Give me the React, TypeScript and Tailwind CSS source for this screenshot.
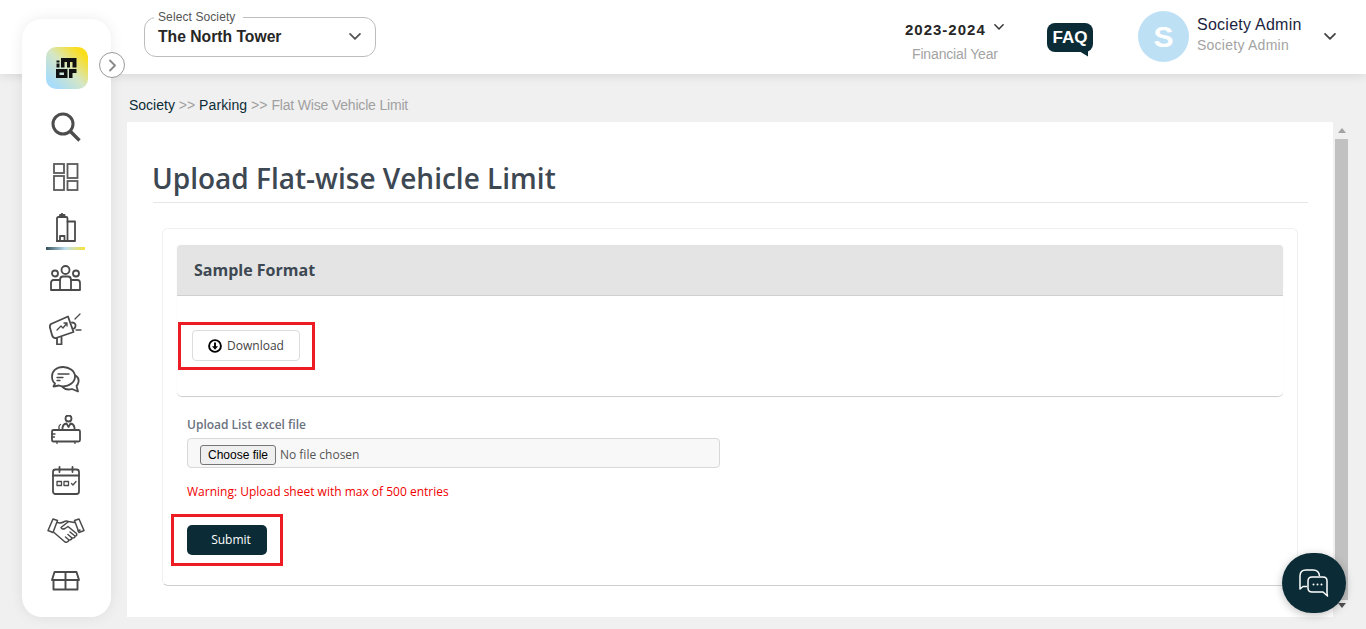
import React from "react";

const S = { fill: "none", stroke: "#4a4a4a", strokeWidth: 1.8, strokeLinecap: "round" as const, strokeLinejoin: "round" as const };

function Logo() {
  return (
    <div className="w-[42px] h-[42px] rounded-[10px] bg-[linear-gradient(45deg,#a9dcf8_15%,#d5e6c4_50%,#fade1e_85%)] flex items-center justify-center">
      <svg width="21" height="20" viewBox="0 0 21 20">
        <path fill="#111" fillRule="evenodd" d="M0.500 2.500H3.500V4.500H0.500ZM0.500 5.500H3.500V9.500H0.500ZM5 0H20.500V9.500H16.500V4H14V9.500H11V4H8.500V9.500H5ZM0 11H11.500V20H0ZM3.500 14.500V17H8V14.500ZM13 11H20.500V15H16.500V20H13Z" />
      </svg>
    </div>
  );
}

function SearchIcon() {
  return (
    <svg width="30" height="30" viewBox="0 0 30 30" fill="none" stroke="#4d4d4d" strokeWidth="3">
      <circle cx="12" cy="12" r="10" />
      <path d="M19.500 19.500L28.500 28.500" strokeWidth="3.400" />
    </svg>
  );
}
function GridIcon() {
  return (
    <svg width="26" height="28" viewBox="0 0 26 28" fill="none" stroke="#5a5a5a" strokeWidth="1.800">
      <rect x="1" y="1" width="10" height="9" />
      <rect x="14.500" y="1" width="10" height="14" />
      <rect x="1" y="13" width="10" height="14" />
      <rect x="14.500" y="18" width="10" height="9" />
    </svg>
  );
}
function BuildingIcon() {
  return (
    <svg width="20" height="29" viewBox="0 0 20 29" {...S}>
      <path d="M1 28V5.500Q1 4 2.500 4H10Q11.500 4 11.500 5.500V28" />
      <path d="M4 4V2H8.500V4M6 2V0.500" />
      <path d="M11.500 8.500H19V28H0.500" />
      <path d="M4 28V23H8.500V28" />
    </svg>
  );
}
function PeopleIcon() {
  return (
    <svg width="31" height="26" viewBox="0 0 31 26" {...S}>
      <circle cx="15.500" cy="5" r="4" />
      <circle cx="5" cy="8.500" r="3" />
      <circle cx="26" cy="8.500" r="3" />
      <path d="M10 25V15Q10 11.500 13 11.500H18Q21 11.500 21 15V25Z" />
      <path d="M10 15H3.500Q1 15 1 18V25H10M21 15H27.500Q30 15 30 18V25H21" />
    </svg>
  );
}
function MegaphoneIcon() {
  return (
    <svg width="33" height="32" viewBox="0 0 33 32" {...S}>
      <path d="M2 11L19 3.500L24.500 19L7 25Q4 25.500 3 22L0.800 14Q0.800 12 2 11Z" />
      <path d="M8 17L12 13L14 15L18 10M15 10H18V13" strokeWidth="1.300" />
      <path d="M23 9.500Q27 10 26.500 13Q26 16 24 15.500" />
      <path d="M8 25V31.500H12.500V24" />
      <path d="M26 6L31 1M27 17H32" strokeWidth="1.300" />
    </svg>
  );
}
function ChatsIcon() {
  return (
    <svg width="29" height="27" viewBox="0 0 29 27" {...S}>
      <path d="M12 1C5.500 1 1 5 1 10.500C1 13.500 2 16 4 17.500L2.500 20.500L8 19.500Q10 20.300 12 20.300C18.500 20.300 24 16 24 10.500C24 5 18.500 1 12 1Z" />
      <path d="M7 8H18M6 11.500H12M6 14.500H9" strokeWidth="1.300" />
      <path d="M24.500 9.500C27 11 28 13.500 27.500 16C27 18.500 26 19.500 25.500 20L27 25.500L21 23C17.500 24 14 23.500 11.500 21" />
    </svg>
  );
}
function ReceptionIcon() {
  return (
    <svg width="30" height="29" viewBox="0 0 30 29" {...S}>
      <circle cx="17.500" cy="3.500" r="3" />
      <path d="M11.500 15V12.500Q12 9 15.500 8.500L17.500 12L19.500 8.500Q23 9 23.500 12.500V15" />
      <path d="M8 14V11.500Q8.500 10 9.500 9.500" strokeWidth="1.300" />
      <path d="M2.500 15H27.500Q29 15 29 16.500V25Q29 26.500 27.500 26.500H2.500Q1 26.500 1 25V16.500Q1 15 2.500 15Z" />
      <path d="M1 19H4M1 22H3.500M6 26.500V28.500M24 26.500V28.500" strokeWidth="1.300" />
    </svg>
  );
}
function CalendarIcon() {
  return (
    <svg width="28" height="29" viewBox="0 0 28 29" {...S}>
      <rect x="1" y="3.500" width="26" height="24.500" rx="2.500" />
      <path d="M1 9.500H27M7.500 1V6M20.500 1V6" />
      <rect x="5" y="15.500" width="4.500" height="4" strokeWidth="1.300" />
      <rect x="12" y="15.500" width="4.500" height="4" strokeWidth="1.300" />
      <path d="M19.500 17.500L21 19L24 15.500" strokeWidth="1.300" />
    </svg>
  );
}
function HandshakeIcon() {
  return (
    <svg width="38" height="26" viewBox="0 0 38 26" {...S} strokeWidth="1.500">
      <path d="M6 1L10.500 2.500L6 14.500L1 12.500Z" />
      <path d="M32 1L27.500 2.500L32 14.500L37 12.500Z" />
      <path d="M10 4.500Q14 5.500 16.500 4Q19 2.500 21.500 3.500L27.500 4.500" />
      <path d="M31 13L33 12M21 4L14 9.500Q15 12 18 10.500L21 8.500L29.500 15.500Q30.500 18 28 18L23 14M28 18Q28 20.500 25 20L21 16.500M25 20Q24.500 22.500 22 22L18.500 19M22 22Q21 25 18 24L7 14.500" />
    </svg>
  );
}
function BoxIcon() {
  return (
    <svg width="29" height="20" viewBox="0 0 29 20" {...S} strokeWidth="1.900">
      <path d="M3.500 1H25.500L28 9H1Z" />
      <path d="M2.500 9V18.500H26.500V9M14.500 1V18.500" />
    </svg>
  );
}

function Chevron({ w = 12, sw = 2, color = "#4a4a4a" }: { w?: number; sw?: number; color?: string }) {
  return (
    <svg width={w} height={w * 0.62} viewBox="0 0 12 7.500" fill="none" stroke={color} strokeWidth={sw} strokeLinecap="round" strokeLinejoin="round">
      <path d="M1 1L6 6L11 1" />
    </svg>
  );
}

const railItems = [
  { icon: <SearchIcon /> },
  { icon: <GridIcon /> },
  { icon: <BuildingIcon />, active: true },
  { icon: <PeopleIcon /> },
  { icon: <MegaphoneIcon /> },
  { icon: <ChatsIcon /> },
  { icon: <ReceptionIcon /> },
  { icon: <CalendarIcon /> },
  { icon: <HandshakeIcon /> },
  { icon: <BoxIcon /> },
];

function Sidebar() {
  return (
    <aside className="absolute left-[22px] top-[19px] w-[89px] h-[598px] bg-white rounded-[20px] shadow-[0_0_14px_rgba(0,0,0,0.08)] z-20 pt-[28px] flex flex-col items-center">
      <Logo />
      <div className="mt-[12.500px] w-full flex flex-col">
        {railItems.map((it, i) => (
          <div key={i} className="relative h-[50.500px] pr-[2px] flex items-center justify-center">
            {it.icon}
            {it.active && (
              <div className="absolute left-[24px] bottom-[3px] w-[39px] h-[3px] bg-[linear-gradient(90deg,#33505a_0%,#bcdff0_50%,#f8e23a_100%)]" />
            )}
          </div>
        ))}
      </div>
      <button className="absolute left-[77px] top-[33px] w-[26px] h-[26px] rounded-full bg-white border border-[#9a9a9a] flex items-center justify-center">
        <svg width="9" height="13" viewBox="0 0 9 13" fill="none" stroke="#888" strokeWidth="1.800" strokeLinecap="round" strokeLinejoin="round">
          <path d="M2 1.500L7 6.500L2 11.500" />
        </svg>
      </button>
    </aside>
  );
}

function Header() {
  return (
    <header className="relative z-10 h-[74px] bg-white shadow-[0_2px_10px_rgba(0,0,0,0.1)] flex items-start pl-[144px] font-['Liberation_Sans',Arial,sans-serif]">
      <div className="relative mt-[17px] w-[232px] h-[40px] border border-[#bdbdbd] rounded-[12px] flex items-center justify-between pl-[13px] pr-[14px]">
        <span className="absolute left-[9px] -top-[7px] bg-white pl-[4px] pr-[8px] text-[12px] leading-[13px] tracking-[0.1px] text-[#555]">Select Society</span>
        <span className="text-[15.700px] font-bold text-[#262626]">The North Tower</span>
        <Chevron w={12} sw={1.800} color="#555" />
      </div>
      <div className="ml-[529px] w-[100px] mt-[19px] flex flex-col items-start">
        <div className="flex items-start h-[21px]">
          <span className="whitespace-nowrap text-[15px] leading-[21px] font-bold tracking-[1px] text-[#262626]">2023-2024</span>
          <span className="ml-[8px] mt-[5px]"><Chevron w={10} sw={1.800} color="#333" /></span>
        </div>
        <span className="mt-[4px] ml-[7px] whitespace-nowrap text-[14px] leading-[20px] tracking-[-0.15px] text-[#a3a3a3]">Financial Year</span>
      </div>
      <div className="ml-[42px] mt-[23px] w-[46px] h-[33px] relative">
        <div className="w-[46px] h-[29px] rounded-[8px] bg-[#0b2c36] text-white font-bold text-[17px] flex items-center justify-center">FAQ</div>
        <svg className="absolute left-[32px] top-[28px]" width="9" height="6" viewBox="0 0 9 6"><path d="M0 0H9V5.500Z" fill="#0b2c36" /></svg>
      </div>
      <div className="ml-[45px] mt-[11px] w-[51px] h-[51px] rounded-full bg-[#bde0f5] text-white text-[30px] font-bold flex items-center justify-center">S</div>
      <div className="ml-[8px] mt-[15px] flex flex-col">
        <span className="whitespace-nowrap text-[16px] leading-[20px] tracking-[0.25px] text-[#1c2440]">Society Admin</span>
        <span className="whitespace-nowrap text-[14px] leading-[20px] tracking-[0.25px] text-[#a3a3a3]">Society Admin</span>
      </div>
      <span className="ml-[22px] mt-[33px]"><Chevron w={12} sw={1.800} color="#444" /></span>
    </header>
  );
}

function Scrollbar() {
  return (
    <div className="w-[13px] ml-[2px] h-full flex flex-col items-center">
      <svg className="mt-[6px]" width="8" height="5" viewBox="0 0 8 5"><path d="M4 0L8 5H0Z" fill="#a3a3a3" /></svg>
      <div className="mt-[6px] w-[13px] h-[461px] bg-[#c1c1c1]" />
      <svg className="mt-[3px]" width="8" height="5" viewBox="0 0 8 5"><path d="M0 0H8L4 5Z" fill="#505050" /></svg>
    </div>
  );
}

export default function App() {
  return (
    <div className="relative w-[1366px] h-[629px] overflow-hidden bg-[#f0f0f0] font-['Open_Sans',sans-serif]">
      <Header />
      <Sidebar />
      <div className="h-[48px] pl-[129px] pt-[22px] text-[14px] leading-[18px] font-['Liberation_Sans',Arial,sans-serif] text-[#a0a0a0]">
        <span className="text-[#0b2c36]">Society</span> &gt;&gt; <span className="text-[#0b2c36] tracking-[0.1px]">Parking</span> &gt;&gt; <span className="tracking-[-0.18px]">Flat Wise Vehicle Limit</span>
      </div>
      <div className="ml-[127px] h-[495px] flex">
        <main className="w-[1206px] h-full bg-white pl-[26px] pr-[25px]">
          <h1 className="pt-[36px] h-[81px] border-b border-[#e6e6e6] text-[28px] leading-[40px] font-semibold text-[#3d4852]"><span className="-ml-[1px] inline-block">Upload Flat-wise Vehicle Limit</span></h1>
          <section className="mt-[25px] ml-[9px] mr-[10px] h-[358px] rounded-[6px] border border-[#f0f0f0] border-b-[#cfcfcf] pt-[16px] px-[14px]">
            <div className="h-[152px] rounded-t-[4px] rounded-b-[5px] border-b border-[#d0d0d0] shadow-[0_0_2px_rgba(0,0,0,0.05)]">
              <div className="h-[51px] bg-[#e4e4e4] border-b border-[#d0d0d0] pl-[17px] flex items-center rounded-t-[4px]">
                <h2 className="text-[16px] font-bold text-[#3d4852]">Sample Format</h2>
              </div>
              <div className="pt-[26px] pl-[1px]">
                <div className="w-[137px] h-[48px] border-[3px] border-[#ed1c24] pl-[11px] pt-[5px]">
                  <button className="w-[108px] h-[31px] rounded-[4px] border border-[#dcdcdc] bg-white flex items-center justify-center gap-[5px] text-[12px] text-[#444]">
                    <svg width="14" height="14" viewBox="0 0 14 14" fill="none" stroke="#000" strokeWidth="1.900">
                      <circle cx="7" cy="7" r="5.900" />
                      <path d="M7 3.500V9" strokeWidth="1.900" />
                      <path d="M4 7.200L7 10.700L10 7.200Z" fill="#000" stroke="none" />
                    </svg>
                    Download
                  </button>
                </div>
              </div>
            </div>
            <div className="pl-[10px]">
              <label className="block mt-[19px] text-[12px] leading-[17px] font-semibold text-[#6b7280]">Upload List excel file</label>
              <div className="mt-[5px] w-[533px] h-[30px] rounded-[4px] border border-[#d8d8d8] bg-[#f8f8f8] pl-[12px] pt-[3px] flex items-center gap-[4px] text-[12px] text-[#555]">
                <span className="w-[76px] h-[20px] rounded-[3px] border border-[#767676] bg-[#efefef] flex items-center justify-center text-[12px] text-black font-['Liberation_Sans',Arial,sans-serif]">Choose file</span>
                <span>No file chosen</span>
              </div>
              <p className="mt-[15px] text-[12px] leading-[17px] text-[#f00000]">Warning: Upload sheet with max of 500 entries</p>
            </div>
            <div className="-ml-[6px] mt-[14px] w-[112px] h-[52px] border-[3px] border-[#ed1c24] pl-[13px] pt-[8px]">
              <button className="w-[80px] h-[30px] rounded-[5px] bg-[#0b2c36] text-white text-[12px] font-medium pl-[8px]">Submit</button>
            </div>
          </section>
        </main>
        <Scrollbar />
      </div>
      <button className="absolute left-[1282px] top-[553px] w-[64px] h-[60px] rounded-full bg-[#0b2c36] shadow-[0_2px_8px_rgba(0,0,0,0.25)] flex items-center justify-center z-20">
        <svg width="30" height="28" viewBox="0 0 30 28" fill="none" stroke="#fff" strokeWidth="1.500" strokeLinejoin="round">
          <path d="M8 17.500H4L1 20V7Q1 1 7 1H14Q20 1 20.500 7" />
          <path d="M13 8H24Q28 8 28 12V24L28.500 27L24 23H13Q9 23 9 19V12Q9 8 13 8Z" />
          <circle cx="14.500" cy="15.500" r="1" fill="#fff" stroke="none" />
          <circle cx="18.500" cy="15.500" r="1" fill="#fff" stroke="none" />
          <circle cx="22.500" cy="15.500" r="1" fill="#fff" stroke="none" />
        </svg>
      </button>
    </div>
  );
}
